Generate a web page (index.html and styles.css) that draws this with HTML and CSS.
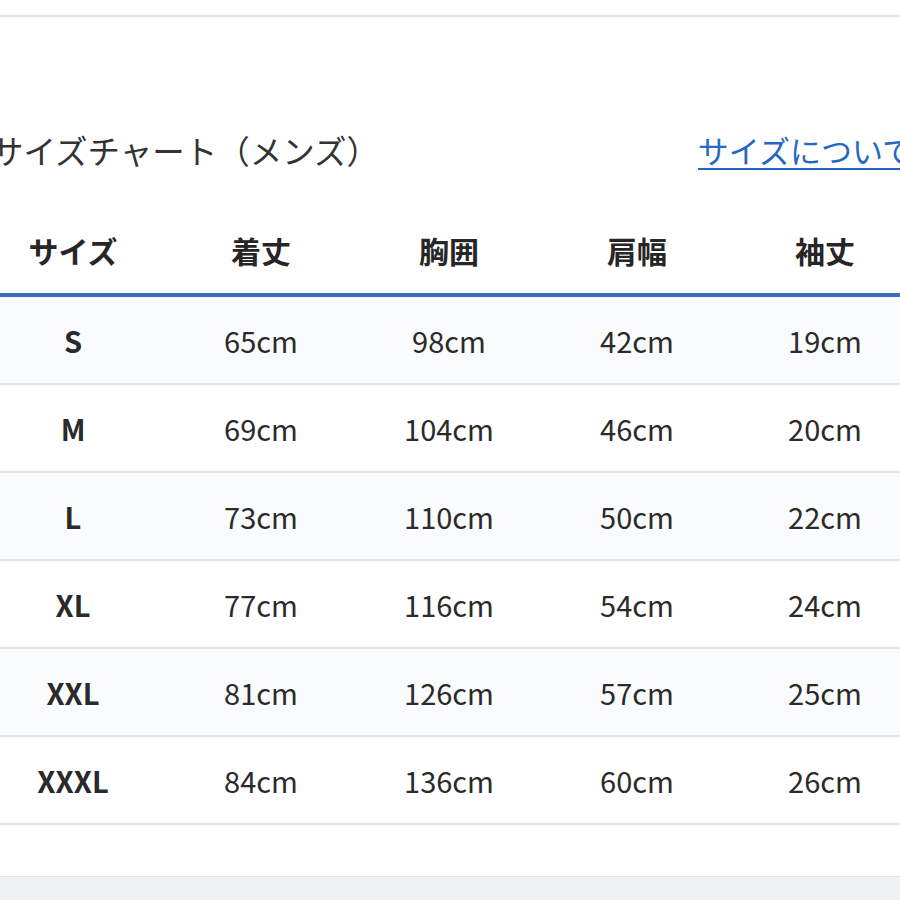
FILE: index.html
```html
<!DOCTYPE html>
<html lang="ja">
<head>
<meta charset="utf-8">
<link rel="stylesheet" href="styles.css">
</head>
<body>
<div class="page">
  <div class="topbar"></div>
  <div class="section">
    <div class="titlebar">
      <h2 class="title">サイズチャート（メンズ）</h2>
      <a class="link" href="#">サイズについて</a>
    </div>
    <table class="chart">
      <thead>
        <tr><th>サイズ</th><th>着丈</th><th>胸囲</th><th>肩幅</th><th>袖丈</th></tr>
      </thead>
      <tbody>
        <tr><td class="size">S</td><td>65cm</td><td>98cm</td><td>42cm</td><td>19cm</td></tr>
        <tr><td class="size">M</td><td>69cm</td><td>104cm</td><td>46cm</td><td>20cm</td></tr>
        <tr><td class="size">L</td><td>73cm</td><td>110cm</td><td>50cm</td><td>22cm</td></tr>
        <tr><td class="size">XL</td><td>77cm</td><td>116cm</td><td>54cm</td><td>24cm</td></tr>
        <tr><td class="size">XXL</td><td>81cm</td><td>126cm</td><td>57cm</td><td>25cm</td></tr>
        <tr><td class="size">XXXL</td><td>84cm</td><td>136cm</td><td>60cm</td><td>26cm</td></tr>
      </tbody>
    </table>
  </div>
  <div class="footer"></div>
</div>
</body>
</html>
```
FILE: styles.css
```css
html, body {
  margin: 0;
  padding: 0;
  background: #ffffff;
}
body {
  font-family: "Noto Sans CJK JP", "Noto Sans", sans-serif;
  color: #2a2a2a;
  overflow: hidden;
}
.page {
  width: 900px;
  height: 900px;
  overflow: hidden;
  display: flex;
  flex-direction: column;
}
.topbar {
  height: 15px;
  border-bottom: 2px solid #e4e4e4;
  flex: none;
}
.section {
  flex: none;
  padding-bottom: 51px;
}
.titlebar {
  display: flex;
  justify-content: space-between;
  align-items: center;
  margin: 113px -21px 0;
  padding: 0 0 0 12px;
  height: 40px;
}
.title {
  margin: 0;
  font-size: 32.5px;
  font-weight: 400;
  line-height: 40px;
  color: #333333;
  white-space: nowrap;
}
.link {
  margin-right: 8px;
  font-size: 31px;
  line-height: 40px;
  color: #2568c4;
  text-decoration: underline;
  text-decoration-thickness: 2px;
  text-underline-offset: 5px;
  white-space: nowrap;
}
.chart {
  margin: 37px -21px 0;
  width: 940px;
  table-layout: fixed;
  border-collapse: collapse;
}
.chart th {
  height: 86px;
  padding: 0;
  font-size: 30px;
  font-weight: 700;
  color: #262626;
  text-align: center;
  border-bottom: 4px solid #3a6cc0;
}
.chart td {
  height: 86px;
  padding: 0;
  font-size: 29px;
  font-weight: 400;
  color: #2a2a2a;
  text-align: center;
  border-bottom: 2px solid #e3e3e3;
}
.chart tbody tr:nth-child(odd) {
  background: #fafbfc;
}
.chart td.size {
  font-weight: 700;
  font-size: 29px;
}
.footer {
  flex: 1;
  background: #eef0f2;
  border-top: 1px solid #e3e5e7;
}
```
